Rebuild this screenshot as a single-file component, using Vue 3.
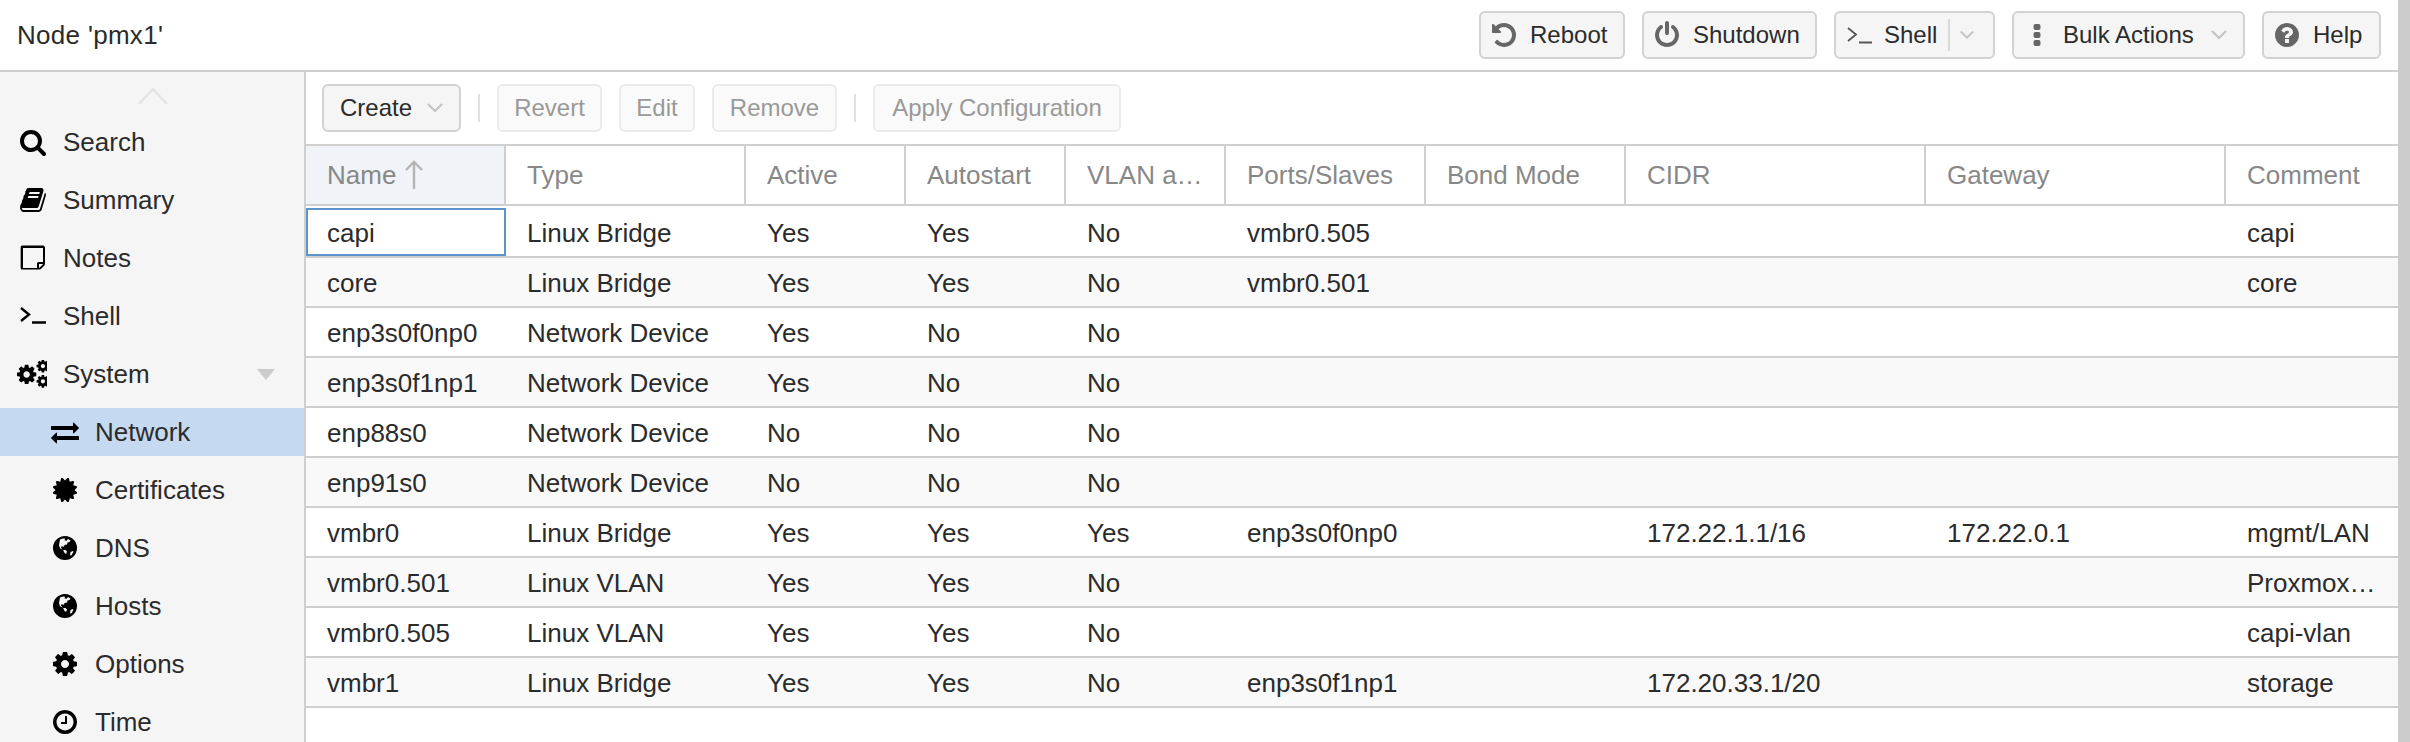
<template>
  <div class="page">
    <div class="content">
      <header class="topbar">
        <div class="title">Node 'pmx1'</div>
        <div class="actions">
          <button class="btn reboot"><svg class="ico grey" viewBox="0 0 1792 1792"><path :d="paths.undo" /></svg>Reboot</button>
          <button class="btn shutdown"><svg class="ico grey" viewBox="0 0 1792 1792"><path :d="paths.power" /></svg>Shutdown</button>
          <button class="btn shell">
            <svg class="ico" viewBox="0 0 28 28"><path class="term thin" d="M3 7l8 6.5-8 6.5M14 21.5h13" /></svg>Shell
            <span class="split"></span>
            <svg class="chev small" viewBox="0 0 18 12"><path d="M2 2l7 7 7-7" /></svg>
          </button>
          <button class="btn bulk">
            <svg class="ico grey" viewBox="0 0 28 28"><rect x="10.5" y="3" width="7" height="6" rx="2" /><rect x="10.5" y="11" width="7" height="6" rx="2" /><rect x="10.5" y="19" width="7" height="6" rx="2" /></svg>Bulk Actions
            <svg class="chev" viewBox="0 0 18 12"><path d="M2 2l7 7 7-7" /></svg>
          </button>
          <button class="btn help"><svg class="ico grey" viewBox="0 0 1792 1792"><path :d="paths.help" /></svg>Help</button>
        </div>
      </header>

      <div class="body">
        <aside class="sidebar">
          <svg class="scroll-up" viewBox="0 0 30 18"><path d="M1 17L15 2l14 15" /></svg>
          <div v-for="item in menu" :key="item.label" class="menu-item" :class="{ sub: item.sub, active: item.active }">
            <svg v-if="item.icon === 'shell'" class="ico" viewBox="0 0 28 28"><path class="term" d="M2 6l8 6.5-8 6.5M13 20.5h14" /></svg>
            <svg v-else-if="item.icon === 'cogs'" class="ico wide" viewBox="17 360 31 29">
              <path :d="paths.cog" transform="translate(15.3 363.3) scale(0.013)" />
              <path :d="paths.cog" transform="translate(36.1 358.6) scale(0.0086)" />
              <path :d="paths.cog" transform="translate(36.1 374.4) scale(0.0086)" />
            </svg>
            <svg v-else-if="item.icon === 'globe'" class="ico" viewBox="0 0 28 28">
              <path fill-rule="evenodd" d="M14 2a12 12 0 1 0 0 24 12 12 0 0 0 0-24zM9 5.5c2-1 4-1.3 5-.8l-.5 1.5 2 .6 1.5-1.7 2.5 1.4-1 1.5-2 .4-.5 2-2.5.6-.5 1.8-2.5-.5-.5 1.2 1.500 2.300 3 .3 1.500 1.500-.8 2.200-1.500-.5-1.700-3.500-3-1.500-1-3.300zM19.500 18l2.200-1 .8.800-2 3.500-1.500.2z" />
            </svg>
            <svg v-else class="ico" viewBox="0 0 1792 1792"><path :d="paths[item.icon]" /></svg>
            <span>{{ item.label }}</span>
            <span v-if="item.caret" class="caret"></span>
          </div>
        </aside>

        <main class="panel">
          <div class="toolbar">
            <button class="btn create">Create<svg class="chev" viewBox="0 0 18 12"><path d="M2 2l7 7 7-7" /></svg></button>
            <span class="sep"></span>
            <button class="btn off revert">Revert</button>
            <button class="btn off edit">Edit</button>
            <button class="btn off remove">Remove</button>
            <span class="sep"></span>
            <button class="btn off apply">Apply Configuration</button>
          </div>

          <div class="grid-head">
            <div v-for="(col, i) in columns" :key="col" class="head-cell" :class="{ sorted: i === 0 }">
              <span class="head-text">{{ col }}</span>
              <svg v-if="i === 0" class="sort" viewBox="0 0 20 30"><path d="M10 29V2M2 10l8-8 8 8" /></svg>
            </div>
          </div>

          <div class="grid-body">
            <div v-for="(row, r) in rows" :key="row[0]" class="row">
              <div v-for="(val, c) in row" :key="c" class="cell" :class="{ focus: r === 0 && c === 0 }">{{ val }}</div>
            </div>
          </div>
        </main>
      </div>
    </div>
  </div>
</template>

<script setup>
const paths = {
  search: 'M1216 832q0-185-131.5-316.5t-316.5-131.5-316.5 131.5-131.5 316.5 131.5 316.5 316.5 131.5 316.5-131.5 131.5-316.5zm512 832q0 52-38 90t-90 38q-54 0-90-38l-343-342q-179 124-399 124-143 0-273.5-55.5t-225-150-150-225-55.5-273.5 55.5-273.5 150-225 225-150 273.5-55.5 273.5 55.5 225 150 150 225 55.5 273.5q0 220-124 399l343 343q37 37 37 90z',
  book: 'M1703 478q40 57 18 129l-275 906q-19 64-76.5 107.5t-122.5 43.5h-923q-77 0-148.5-53.5t-99.5-131.5q-24-67-2-127 0-4 3-27t4-37q1-8-3-21.5t-3-19.5q2-11 8-21t16.5-23.5 16.5-23.5q23-38 45-91.5t30-91.5q3-10 .5-30t-.5-28q3-11 17-28t17-23q21-36 42-92t25-90q1-9-2.5-32t.5-28q4-13 22-30.5t22-22.5q19-26 42.5-84.5t27.5-96.5q1-8-3-25.5t-2-26.5q2-8 9-18t18-23 17-21q8-12 16.5-30.5t15-35 16-36 19.5-32 26.5-23.5 36-11.5 47.5 5.5l-1 3q38-9 51-9h761q74 0 114 56t18 130l-274 906q-36 119-71.5 153.5t-128.5 34.5h-869q-27 0-38 15-11 16-1 43 24 70 144 70h923q29 0 56-15.5t35-41.5l300-987q7-22 5-57 38 15 59 43zm-1064 2q-4 13 2 22.5t20 9.5h608q13 0 25.5-9.5t16.5-22.5l21-64q4-13-2-22.5t-20-9.5h-608q-13 0-25.5 9.5t-16.5 22.5zm-83 256q-4 13 2 22.5t20 9.5h608q13 0 25.5-9.5t16.5-22.5l21-64q4-13-2-22.5t-20-9.5h-608q-13 0-25.5 9.5t-16.5 22.5z',
  note: 'M1528 1280h-248v248q29-10 41-22l185-185q12-12 22-41zm-280-128h288v-896h-1280v1280h896v-288q0-40 28-68t68-28zm416-928v1024q0 40-20 88t-48 76l-158 158q-28 28-76 48t-88 20h-1072q-40 0-68-28t-28-68v-1344q0-40 28-68t68-28h1344q40 0 68 28t28 68z',
  cog: 'M1152 896q0-106-75-181t-181-75-181 75-75 181 75 181 181 75 181-75 75-181zm512-109v222q0 12-8 23t-20 13l-185 28q-19 54-39 91 35 50 107 138 10 12 10 25t-9 23q-27 37-99 108t-94 71q-12 0-26-9l-138-108q-44 23-91 38-16 136-29 186-7 28-36 28h-222q-14 0-24.5-8.5t-11.5-21.5l-28-184q-49-16-90-37l-141 107q-10 9-25 9-14 0-25-11-126-114-165-168-7-10-7-23 0-12 8-23 15-21 51-66.5t54-70.5q-27-50-41-99l-183-27q-13-2-21-12.5t-8-23.5v-222q0-12 8-23t19-13l186-28q14-46 39-92-40-57-107-138-10-12-10-24 0-10 9-23 26-36 98.5-107.5t94.5-71.5q13 0 26 10l138 107q44-23 91-38 16-136 29-186 7-28 36-28h222q14 0 24.5 8.5t11.5 21.5l28 184q49 16 90 37l142-107q9-9 24-9 13 0 25 10 129 119 165 170 7 8 7 22 0 12-8 23-15 21-51 66.5t-54 70.5q26 50 41 98l183 28q13 2 21 12.5t8 23.5z',
  exchange: 'M1792 1184v192q0 13-9.5 22.5t-22.5 9.5h-1376v192q0 13-9.5 22.5t-22.5 9.5q-12 0-24-10l-319-320q-9-9-9-22 0-14 9-23l320-320q9-9 23-9 13 0 22.5 9.5t9.5 22.5v192h1376q13 0 22.5 9.5t9.5 22.5zm0-544q0 14-9 23l-320 320q-9 9-23 9-13 0-22.5-9.5t-9.5-22.5v-192h-1376q-13 0-22.5-9.5t-9.5-22.5v-192q0-13 9.5-22.5t22.5-9.5h1376v-192q0-14 9-23t23-9q12 0 24 10l319 319q9 9 9 23z',
  certificate: 'M1504 896l138 135q30 28 20 70-12 41-52 51l-188 48 53 186q12 41-19 70-29 31-70 19l-186-53-48 188q-10 40-51 52-12 2-19 2-31 0-51-22l-135-138-135 138q-28 30-70 20-41-11-51-52l-48-188-186 53q-41 12-70-19-31-29-19-70l53-186-188-48q-40-10-52-51-10-42 20-70l138-135-138-135q-30-28-20-70 12-41 52-51l188-48-53-186q-12-41 19-70 29-31 70-19l186 53 48-188q10-41 51-51 41-12 70 19l135 139 135-139q29-30 70-19 41 10 51 51l48 188 186-53q41-12 70 19 31 29 19 70l-53 186 188 48q40 10 52 51 10 42-20 70z',
  clock: 'M1024 544v448q0 14-9 23t-23 9h-320q-14 0-23-9t-9-23v-64q0-14 9-23t23-9h224v-352q0-14 9-23t23-9h64q14 0 23 9t9 23zm416 352q0-148-73-273t-198-198-273-73-273 73-198 198-73 273 73 273 198 198 273 73 273-73 198-198 73-273zm224 0q0 209-103 385.5t-279.5 279.5-385.5 103-385.5-103-279.5-279.5-103-385.5 103-385.5 279.5-279.5 385.5-103 385.5 103 279.5 279.5 103 385.5z',
  undo: 'M1664 896q0 156-61 298t-164 245-245 164-298 61q-172 0-327-72.5t-264-204.5q-7-10-6.5-22.5t8.5-20.5l137-138q10-9 25-9 16 2 23 12 73 95 179 147t225 52q104 0 198.5-40.5t163.5-109.5 109.5-163.5 40.5-198.5-40.5-198.5-109.5-163.5-163.5-109.5-198.5-40.5q-98 0-188 35.5t-160 101.5l137 138q31 30 14 69-17 40-59 40h-448q-26 0-45-19t-19-45v-448q0-42 40-59 39-17 69 14l130 129q107-101 244.5-156.5t284.5-55.5q156 0 298 61t245 164 164 245 61 298z',
  power: 'M1664 896q0 156-61 298t-164 245-245 164-298 61-298-61-245-164-164-245-61-298q0-182 80.5-343t226.5-270q43-32 95.5-25t83.5 50q32 42 24.5 94.5t-49.5 84.5q-98 74-151.5 181t-53.5 228q0 104 40.5 198.5t109.5 163.5 163.5 109.5 198.5 40.5 198.5-40.5 163.5-109.5 109.5-163.5 40.5-198.5q0-121-53.5-228t-151.5-181q-42-32-49.5-84.5t24.5-94.5q31-43 84-50t95 25q146 109 226.5 270t80.5 343zm-640-768v640q0 52-38 90t-90 38-90-38-38-90v-640q0-52 38-90t90-38 90 38 38 90z',
  help: 'M1024 1376v-192q0-14-9-23t-23-9h-192q-14 0-23 9t-9 23v192q0 14 9 23t23 9h192q14 0 23-9t9-23zm256-672q0-88-55.5-163t-138.5-116-170-41q-243 0-371 213-15 24 8 42l132 100q7 6 19 6 16 0 25-12 53-68 86-92 34-24 86-24 48 0 85.5 26t37.5 59q0 38-20 61t-68 45q-63 28-115.5 86.5t-52.5 125.5v36q0 14 9 23t23 9h192q14 0 23-9t9-23q0-19 21.5-49.5t54.5-49.5q32-18 49-28.5t46-35 44.5-48 28-60.5 12.5-81zm384 192q0 209-103 385.5t-279.5 279.5-385.5 103-385.5-103-279.5-279.5-103-385.5 103-385.5 279.5-279.5 385.5-103 385.5 103 279.5 279.5 103 385.5z',
}

const menu = [
  { label: 'Search', icon: 'search' },
  { label: 'Summary', icon: 'book' },
  { label: 'Notes', icon: 'note' },
  { label: 'Shell', icon: 'shell' },
  { label: 'System', icon: 'cogs', caret: true },
  { label: 'Network', icon: 'exchange', sub: true, active: true },
  { label: 'Certificates', icon: 'certificate', sub: true },
  { label: 'DNS', icon: 'globe', sub: true },
  { label: 'Hosts', icon: 'globe', sub: true },
  { label: 'Options', icon: 'cog', sub: true },
  { label: 'Time', icon: 'clock', sub: true },
]

const columns = ['Name', 'Type', 'Active', 'Autostart', 'VLAN aware', 'Ports/Slaves', 'Bond Mode', 'CIDR', 'Gateway', 'Comment']

const rows = [
  ['capi', 'Linux Bridge', 'Yes', 'Yes', 'No', 'vmbr0.505', '', '', '', 'capi'],
  ['core', 'Linux Bridge', 'Yes', 'Yes', 'No', 'vmbr0.501', '', '', '', 'core'],
  ['enp3s0f0np0', 'Network Device', 'Yes', 'No', 'No', '', '', '', '', ''],
  ['enp3s0f1np1', 'Network Device', 'Yes', 'No', 'No', '', '', '', '', ''],
  ['enp88s0', 'Network Device', 'No', 'No', 'No', '', '', '', '', ''],
  ['enp91s0', 'Network Device', 'No', 'No', 'No', '', '', '', '', ''],
  ['vmbr0', 'Linux Bridge', 'Yes', 'Yes', 'Yes', 'enp3s0f0np0', '', '172.22.1.1/16', '172.22.0.1', 'mgmt/LAN'],
  ['vmbr0.501', 'Linux VLAN', 'Yes', 'Yes', 'No', '', '', '', '', 'Proxmox cluster'],
  ['vmbr0.505', 'Linux VLAN', 'Yes', 'Yes', 'No', '', '', '', '', 'capi-vlan'],
  ['vmbr1', 'Linux Bridge', 'Yes', 'Yes', 'No', 'enp3s0f1np1', '', '172.20.33.1/20', '', 'storage'],
]
</script>

<style>
html, body {
  margin: 0;
  overflow: hidden;
}
</style>

<style scoped>
.page {
  height: 742px;
  overflow: hidden;
  background: #fff;
  color: #2b2b2b;
  font-family: "Liberation Sans", sans-serif;
  font-size: 26px;
}

.content {
  height: 100%;
  border-right: 12px solid #ccc;
  display: flex;
  flex-direction: column;
}

.topbar {
  flex: none;
  height: 70px;
  border-bottom: 2px solid #cfcfcf;
  display: flex;
  align-items: center;
  justify-content: space-between;
  padding: 0 17px;
}

.title {
  letter-spacing: 0.3px;
}

.actions {
  display: flex;
  gap: 17px;
}

.btn {
  display: flex;
  align-items: center;
  box-sizing: border-box;
  height: 48px;
  padding: 0 0 0 9px;
  border: 2px solid #d2d2d2;
  border-radius: 6px;
  background: #f5f5f5;
  color: #2b2b2b;
  font: inherit;
  font-size: 24px;
  white-space: nowrap;
}

.reboot { width: 146px; }
.shutdown { width: 175px; }
.shell { width: 161px; }
.bulk { width: 233px; }
.help { width: 119px; }
.create { width: 139px; padding-left: 16px; }
.revert { width: 105px; }
.edit { width: 76px; }
.remove { width: 125px; }
.apply { width: 248px; }

.btn .ico {
  margin-right: 12px;
}

.btn.shell .ico {
  margin-right: 11px;
}

.btn.off {
  justify-content: center;
  padding: 0;
  border-color: #ebebeb;
  background: #fafafa;
  color: #999;
}

.ico {
  flex: none;
  width: 28px;
  height: 28px;
  fill: #000;
}

.ico.wide {
  width: 30px;
  margin-left: -2px;
}

.ico.grey {
  fill: #666;
}

.term {
  fill: none;
  stroke: #000;
  stroke-width: 2.4;
}

.term.thin {
  stroke: #555;
  stroke-width: 1.8;
}

.chev {
  flex: none;
  width: 18px;
  height: 12px;
  margin: 0 15px 0 auto;
  fill: none;
  stroke: #c4c4c4;
  stroke-width: 2.2;
}

.chev.small {
  width: 16px;
  margin-right: 18px;
}

.split {
  width: 2px;
  height: 32px;
  margin-left: 11px;
  background: #d9d9d9;
}

.body {
  flex: 1;
  min-height: 0;
  display: flex;
}

.sidebar {
  flex: none;
  position: relative;
  box-sizing: border-box;
  width: 306px;
  padding-top: 46px;
  border-right: 2px solid #cfcfcf;
  background: #f5f5f5;
}

.scroll-up {
  position: absolute;
  left: 138px;
  top: 15px;
  width: 30px;
  height: 18px;
  fill: none;
  stroke: #e4e4e4;
  stroke-width: 2.5;
}

.menu-item {
  display: flex;
  align-items: center;
  height: 48px;
  margin-bottom: 10px;
  padding-left: 19px;
}

.menu-item .ico {
  margin-right: 16px;
}

.menu-item.sub {
  padding-left: 51px;
}

.menu-item.active {
  background: #c5daf0;
}

.caret {
  margin: 0 29px 0 auto;
  border-style: solid;
  border-width: 11px 9px 0;
  border-color: #ccc transparent transparent;
}

.panel {
  flex: 1;
  min-width: 0;
}

.toolbar {
  box-sizing: border-box;
  height: 72px;
  display: flex;
  align-items: center;
  gap: 17px;
  padding-left: 16px;
}

.sep {
  width: 2px;
  height: 28px;
  background: #e2e2e2;
}

.grid-head,
.row {
  display: grid;
  grid-template-columns: 200px 240px 160px 160px 160px 200px 200px 300px 300px 1fr;
}

.grid-head {
  height: 62px;
  box-sizing: border-box;
  border-top: 2px solid #cfcfcf;
  border-bottom: 2px solid #cfcfcf;
}

.head-cell {
  display: flex;
  align-items: center;
  min-width: 0;
  padding: 0 20px 0 21px;
  border-right: 2px solid #cfcfcf;
  color: #888;
}

.head-cell:last-child {
  border-right: 0;
}

.head-cell.sorted {
  background: #f0f4f8;
}

.head-text {
  overflow: hidden;
  text-overflow: ellipsis;
  white-space: nowrap;
}

.sort {
  flex: none;
  width: 20px;
  height: 30px;
  margin-left: 8px;
  fill: none;
  stroke: #b5b5b5;
  stroke-width: 2.4;
}

.grid-body {
  padding-top: 2px;
}

.row {
  height: 50px;
  box-sizing: border-box;
  border-bottom: 2px solid #cfcfcf;
}

.row:nth-child(even) {
  background: #f9f9f9;
}

.cell {
  box-sizing: border-box;
  min-width: 0;
  padding: 0 20px 0 21px;
  line-height: 51px;
  overflow: hidden;
  text-overflow: ellipsis;
  white-space: nowrap;
}

.cell.focus {
  padding: 0 18px 0 19px;
  line-height: 47px;
  border: 2px solid #5b94ca;
}
</style>
